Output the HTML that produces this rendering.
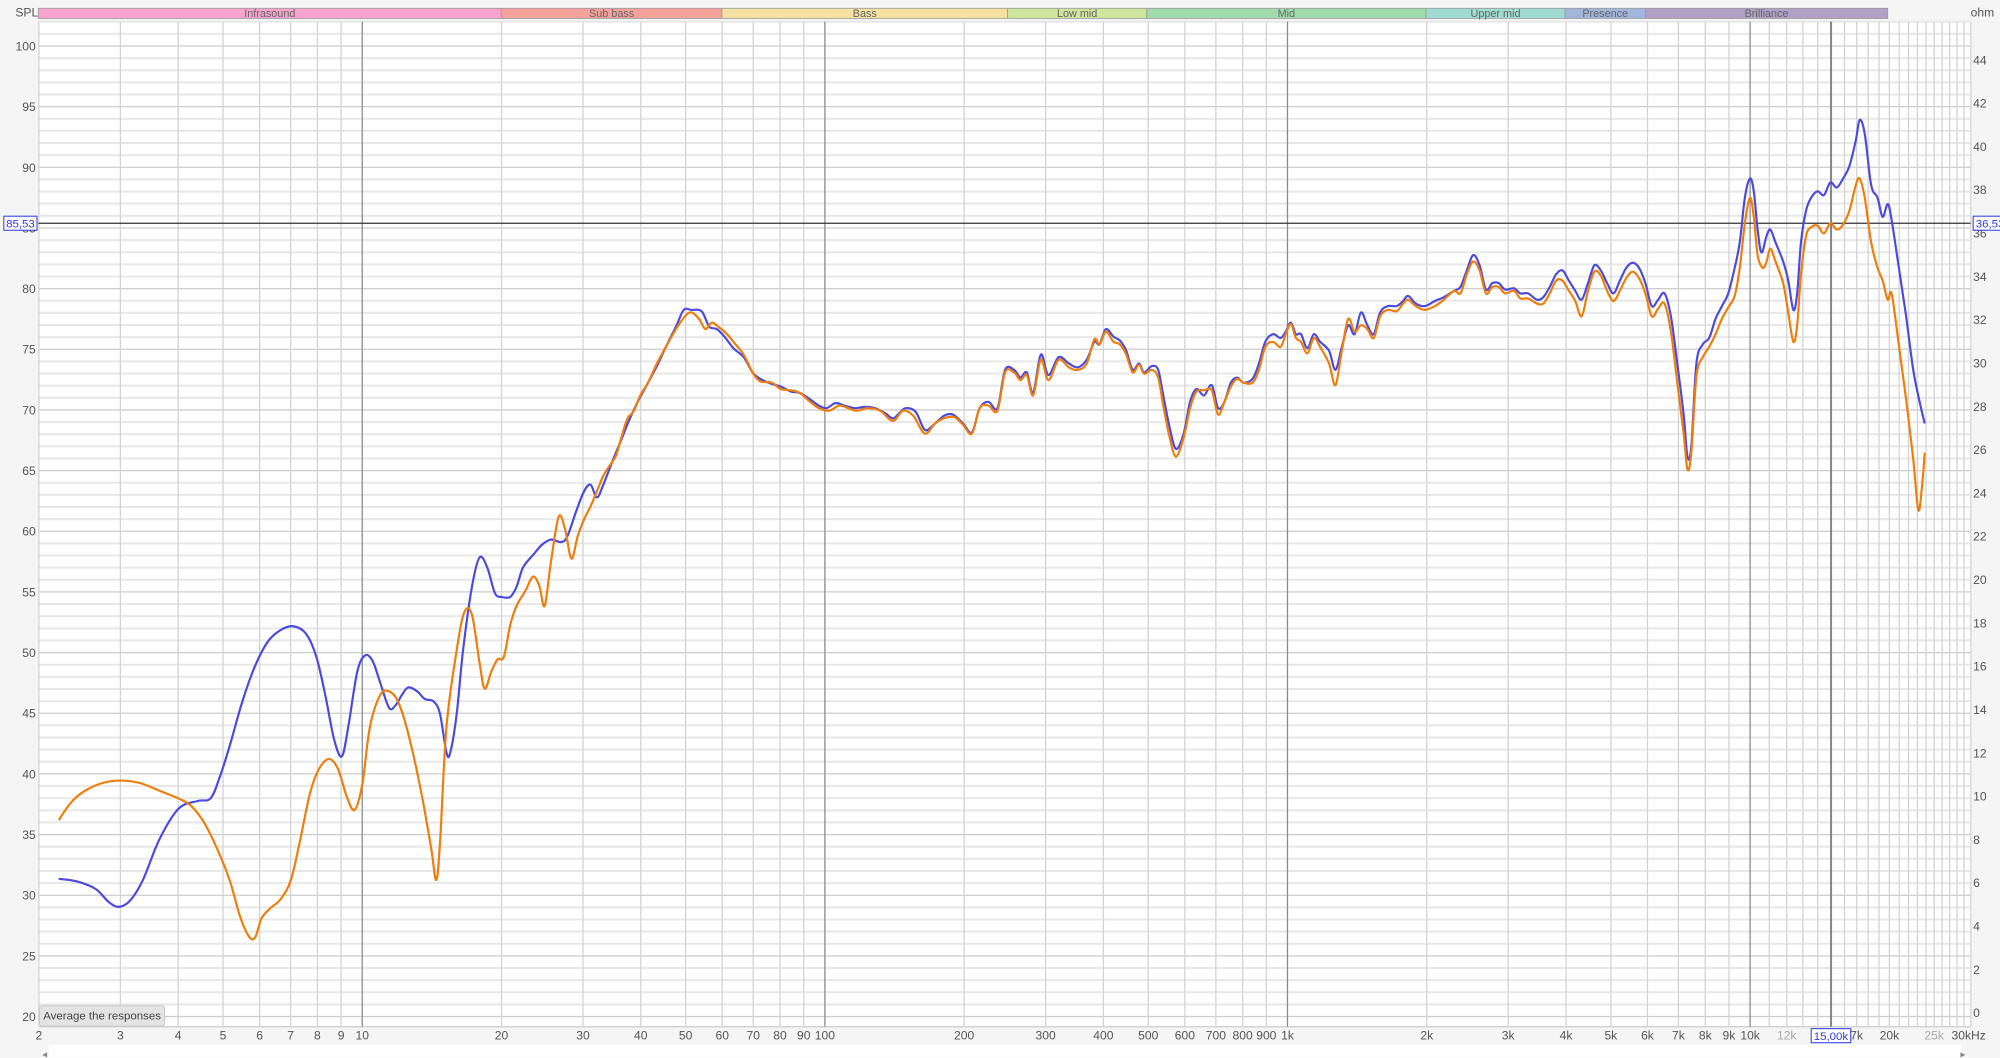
<!DOCTYPE html>
<html><head><meta charset="utf-8">
<style>
html,body{margin:0;padding:0;background:#f5f5f5;overflow:hidden}
svg{display:block;font-family:"Liberation Sans",sans-serif}
</style></head>
<body>
<svg id="s" width="2000" height="1058" viewBox="0 0 1568 829.5" xmlns="http://www.w3.org/2000/svg">
<rect x="0" y="0" width="1568" height="830" fill="#f5f5f5"/>
<rect x="30" y="17" width="1515" height="788" fill="#fff"/>
<g id="grid"></g>
<g id="bands"></g>
<g id="labels" font-size="9.5" fill="#555"></g>
<line x1="30" y1="175" x2="1545" y2="175" stroke="#333" stroke-width="1"/>
<line x1="1435.5" y1="17" x2="1435.5" y2="805" stroke="#555" stroke-width="1"/>
<polyline id="blue" fill="none" stroke="#4a4ae0" stroke-width="1.7" stroke-linejoin="round"/>
<polyline id="orange" fill="none" stroke="#f07d0a" stroke-width="1.7" stroke-linejoin="round"/>
<rect x="3" y="169.5" width="26" height="11" fill="#fff" stroke="#2e3be8" stroke-width="0.8"/>
<text x="16" y="178.3" font-size="9" fill="#2e3be8" text-anchor="middle">85,53</text>
<rect x="1547" y="169.5" width="26" height="11" fill="#fff" stroke="#2e3be8" stroke-width="0.8"/>
<text x="1549" y="178.3" font-size="9" fill="#2e3be8">36,53</text>
<rect x="1420" y="806.5" width="31" height="11" fill="#fff" stroke="#2e3be8" stroke-width="0.8"/>
<text x="1435.5" y="815.3" font-size="9" fill="#2e3be8" text-anchor="middle">15,00k</text>
<rect x="31" y="788.5" width="98" height="16" rx="2" fill="#e4e4e4" stroke="#c8c8c8" stroke-width="0.8"/>
<text x="80" y="799.5" font-size="9" fill="#444" text-anchor="middle">Average the responses</text>
<rect x="38" y="819" width="1500" height="10" fill="#fff"/>
<text x="33" y="829" font-size="8" fill="#888">◂</text>
<text x="1537" y="829" font-size="8" fill="#888">▸</text>
<text x="12" y="13" font-size="9.5" fill="#555">SPL</text>
<text x="1545" y="13" font-size="9.5" fill="#555">ohm</text>
</svg>
<script>
var NS="http://www.w3.org/2000/svg";
function el(p,t,a,txt){var e=document.createElementNS(NS,t);for(var k in a)e.setAttribute(k,a[k]);if(txt!==undefined)e.textContent=txt;p.appendChild(e);return e;}
function X(f){return 284+362.7*Math.log10(f/10);}
var g=document.getElementById('grid'),L=document.getElementById('labels'),B=document.getElementById('bands');
for(var d=20;d<=102;d++){var y=797-(d-20)*9.512;if(y<17)continue;
 el(g,'line',{x1:30,x2:1545,y1:y,y2:y,stroke:(d%5==0)?'#cdcdcd':'#e8e8e8','stroke-width':(d%5==0)?1:1.6});}
el(g,'line',{x1:30,x2:1545,y1:805,y2:805,stroke:'#ccc'});
var fs=[];
for(var i=2;i<=10;i++)fs.push(i);
[10,100,1000].forEach(function(m){for(var i=2;i<=10;i++){fs.push(i*m);}});
for(var k=11;k<=30;k++)fs.push(k*1000);
fs.forEach(function(f){var x=X(f);var dec=(f==10||f==100||f==1000||f==10000);
 el(g,'line',{x1:x,x2:x,y1:17,y2:805,stroke:dec?'#8a8a8a':'#d3d3d3','stroke-width':1});});
for(var d=20;d<=100;d+=5){var y=797-(d-20)*9.512;el(L,'text',{x:28,y:y+3.5,'text-anchor':'end'},d);}
for(var o=0;o<=44;o+=2){var y=794-o*16.98;el(L,'text',{x:1547,y:y+3.5},o);}
var xl=[[2,'2'],[3,'3'],[4,'4'],[5,'5'],[6,'6'],[7,'7'],[8,'8'],[9,'9'],[10,'10'],[20,'20'],[30,'30'],[40,'40'],[50,'50'],[60,'60'],[70,'70'],[80,'80'],[90,'90'],[100,'100'],[200,'200'],[300,'300'],[400,'400'],[500,'500'],[600,'600'],[700,'700'],[800,'800'],[900,'900'],[1000,'1k'],[2000,'2k'],[3000,'3k'],[4000,'4k'],[5000,'5k'],[6000,'6k'],[7000,'7k'],[8000,'8k'],[9000,'9k'],[10000,'10k'],[12000,'12k',1],[17000,'7k'],[20000,'20k'],[25000,'25k',1]];
xl.forEach(function(a){var t=el(L,'text',{x:X(a[0]),y:815,'text-anchor':'middle'},a[1]);if(a[2])t.setAttribute('fill','#aaa');});
el(L,'text',{x:1530,y:815},'30kHz');
var bd=[[30,393,'#f9a3cf','Infrasound'],[393,566,'#f6a29c','Sub bass'],[566,790,'#f5e2a0','Bass'],[790,899,'#d0e69c','Low mid'],[899,1118,'#a2dcac','Mid'],[1118,1227,'#a0dbd2','Upper mid'],[1227,1290,'#a2b6dc','Presence'],[1290,1480,'#b1a0c6','Brilliance']];
bd.forEach(function(b){el(B,'rect',{x:b[0],y:6.5,width:b[1]-b[0],height:8,fill:b[2],stroke:'#999','stroke-width':0.6});
 el(B,'text',{x:(b[0]+b[1])/2,y:13.3,'font-size':8.5,fill:'#666','text-anchor':'middle'},b[3]);});
var blue=[46,689,60,691,75,697,85,707,93,711,102,706,112,690,125,658,140,634,155,628,165,626,172,610,180,585,190,550,200,522,210,503,220,494,230,491,240,497,248,515,255,545,262,580,268,593,273,570,280,527,286,514,292,518,298,535,305,555,310,553,315,545,320,539,327,542,333,548,340,550,345,560,350,590,353,590,358,560,363,510,370,460,376,437,382,445,388,465,393,468,400,468,405,460,410,445,418,435,425,427,432,423,440,425,445,420,452,400,458,385,463,380,468,390,473,380,480,362,487,345,493,330,500,315,507,302,515,287,522,272,530,256,536,243,542,243,550,244,556,256,562,258,568,264,575,273,583,280,590,292,596,297,605,301,612,303,620,307,627,308,635,313,642,318,648,320,655,316,662,318,670,320,678,319,686,320,694,324,700,328,705,324,710,320,718,323,725,337,732,333,740,326,747,325,755,332,762,339,768,320,775,315,782,320,788,290,795,290,800,296,805,292,810,308,816,278,822,294,830,280,838,285,845,288,852,282,858,268,862,270,867,258,873,264,878,267,883,275,888,290,893,285,897,292,903,287,908,290,912,310,917,335,922,352,928,340,933,315,938,305,944,310,950,302,955,320,960,315,965,300,970,296,975,300,982,297,987,285,992,268,998,262,1004,265,1008,260,1012,253,1016,262,1020,262,1025,273,1030,262,1035,268,1042,275,1047,290,1052,272,1057,255,1062,262,1067,245,1072,255,1077,262,1082,245,1088,240,1095,240,1100,236,1104,232,1110,238,1117,240,1125,236,1132,233,1140,228,1145,225,1150,212,1155,200,1160,208,1165,227,1170,222,1175,222,1180,227,1187,226,1192,230,1198,230,1205,235,1210,233,1215,225,1220,215,1225,212,1230,220,1235,228,1240,235,1245,222,1250,208,1255,212,1260,222,1265,230,1270,220,1275,210,1280,206,1285,210,1290,222,1295,240,1300,235,1305,230,1310,248,1315,285,1320,325,1323,358,1326,350,1330,285,1335,270,1340,265,1345,250,1350,240,1355,230,1360,210,1364,190,1368,155,1372,140,1375,150,1378,180,1381,198,1385,185,1388,180,1392,190,1398,205,1402,220,1406,243,1409,230,1412,190,1416,165,1420,155,1425,150,1430,153,1435,143,1440,147,1445,140,1450,130,1455,110,1458,94,1462,105,1467,145,1472,155,1476,170,1480,160,1483,172,1488,205,1494,245,1500,290,1505,315,1509,332];
var orange=[46,643,55,630,65,621,80,614,95,612,110,614,125,620,140,626,150,632,160,645,170,665,180,690,188,718,195,734,200,735,205,720,212,712,220,705,228,690,235,660,243,622,250,603,258,595,265,603,272,625,278,635,284,615,290,570,298,545,305,542,312,550,320,575,330,620,338,665,342,690,345,660,350,570,358,510,364,480,370,482,376,520,380,540,385,527,390,517,395,515,400,490,405,475,412,463,418,452,423,460,427,475,432,440,438,405,443,415,448,438,453,420,458,407,463,397,468,385,473,373,478,365,483,357,488,340,492,328,497,322,502,310,508,300,515,285,522,272,530,258,537,248,542,245,548,250,553,258,558,253,563,256,570,262,575,268,583,278,590,292,596,299,605,300,612,305,620,306,627,308,635,315,642,320,650,322,658,318,665,320,672,322,680,320,690,322,700,330,708,322,716,326,725,340,733,332,740,328,748,327,755,333,762,340,768,320,775,318,782,322,788,292,795,292,800,298,805,294,810,310,816,282,822,298,830,282,838,288,845,290,852,285,858,266,862,270,867,260,873,268,878,270,883,278,888,292,893,286,897,293,903,290,908,296,912,318,917,343,922,358,928,343,933,320,938,307,944,306,950,306,955,325,960,315,965,303,970,297,975,300,982,300,987,290,992,272,998,268,1004,272,1008,262,1012,254,1016,265,1020,268,1025,277,1030,265,1035,272,1042,285,1047,302,1052,275,1057,250,1062,260,1067,255,1072,258,1077,265,1082,248,1088,243,1095,244,1100,238,1104,235,1110,240,1117,243,1125,240,1132,235,1140,228,1145,230,1150,215,1155,205,1160,212,1165,230,1170,225,1175,225,1180,230,1187,228,1192,234,1198,234,1205,238,1210,238,1215,230,1220,220,1225,220,1230,228,1235,236,1240,248,1245,228,1250,213,1255,216,1260,228,1265,236,1270,228,1275,218,1280,213,1285,218,1290,230,1295,248,1300,242,1305,238,1310,260,1315,300,1320,340,1323,368,1326,355,1330,295,1335,280,1340,272,1345,262,1350,250,1355,241,1360,232,1364,210,1368,175,1372,155,1375,170,1378,200,1382,210,1385,205,1388,195,1392,205,1398,222,1402,245,1406,268,1409,255,1412,215,1416,185,1420,178,1425,177,1430,183,1435,175,1440,180,1445,176,1450,165,1455,145,1458,140,1462,155,1467,190,1472,210,1476,220,1480,235,1483,230,1488,265,1494,310,1500,360,1504,400,1507,380,1509,355];
function spline(a){var p=[];for(var i=0;i<a.length;i+=2)p.push([a[i],a[i+1]]);var d='M'+p[0][0]+' '+p[0][1];
for(var i=0;i<p.length-1;i++){var p0=p[i-1]||p[i],p1=p[i],p2=p[i+1],p3=p[i+2]||p2;
d+=' C'+(p1[0]+(p2[0]-p0[0])/6)+' '+(p1[1]+(p2[1]-p0[1])/6)+' '+(p2[0]-(p3[0]-p1[0])/6)+' '+(p2[1]-(p3[1]-p1[1])/6)+' '+p2[0]+' '+p2[1];}return d;}
['blue','orange'].forEach(function(id){var o=document.getElementById(id);var pth=el(o.parentNode,'path',{d:spline(id=='blue'?blue:orange),fill:'none',stroke:o.getAttribute('stroke'),'stroke-width':1.7});o.parentNode.insertBefore(pth,o);o.remove();});
</script>
</body></html>
